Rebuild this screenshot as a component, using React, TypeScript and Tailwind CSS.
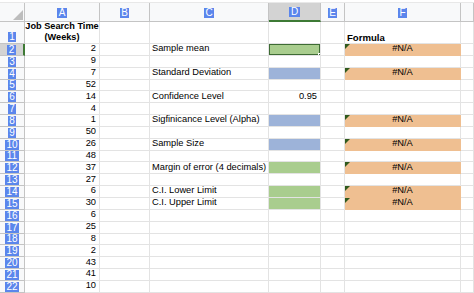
import React from 'react';

type Fill = 'green' | 'blue' | 'orange' | undefined;

interface Row {
    a: string;
    c?: string;
    d?: string;
    dFill?: Fill;
    f?: boolean;
}

const rows: Row[] = [
    { a: '2', c: 'Sample mean', dFill: 'green', f: true },
    { a: '9' },
    { a: '7', c: 'Standard Deviation', dFill: 'blue', f: true },
    { a: '52' },
    { a: '14', c: 'Confidence Level', d: '0.95' },
    { a: '4' },
    { a: '1', c: 'Sigfinicance Level (Alpha)', dFill: 'blue', f: true },
    { a: '50' },
    { a: '26', c: 'Sample Size', dFill: 'blue', f: true },
    { a: '48' },
    { a: '37', c: 'Margin of error (4 decimals)', dFill: 'green', f: true },
    { a: '27' },
    { a: '6', c: 'C.I. Lower Limit', dFill: 'green', f: true },
    { a: '30', c: 'C.I. Upper Limit', dFill: 'green', f: true },
    { a: '6' },
    { a: '25' },
    { a: '8' },
    { a: '2' },
    { a: '43' },
    { a: '41' },
    { a: '10' },
];

const fillClass: Record<string, string> = {
    green: 'bg-[#a9cd8e] border-[#a9cd8e]',
    blue: 'bg-[#9db3d9] border-[#9db3d9]',
    orange: 'bg-[#efbf91] border-[#efbf91]',
};

const COLS = 'grid grid-cols-[25px_75px_50px_119px_52px_24px_116px_1fr]';
const CELL = 'border-r border-b border-[#e3e3e3] flex items-end pb-[0.5px] overflow-hidden whitespace-nowrap leading-[11px]';

const Badge = ({ children }: { children: React.ReactNode }) => (
    <span className="bg-[#5b86ec] text-white text-[10px] leading-[10px] px-[1.5px] h-[10px] flex items-center">
        {children}
    </span>
);

const Corner = () => (
    <span className="absolute top-0 left-0 w-0 h-0 border-t-[5px] border-r-[5px] border-t-[#2f5a1d] border-r-transparent" />
);

export default function App() {
    return (
        <div className="w-[474px] h-[293px] overflow-hidden bg-white text-black text-[9.3px] font-['Liberation_Sans',Arial,sans-serif]">
            <div className="h-[3px] bg-white border-b border-[#e8e8e8]" />

            {/* Column headers */}
            <div className={`${COLS} h-[19px] bg-[#f8f9fa]`}>
                <div className="relative border-r border-b border-[#c4c4c4]">
                    <span className="absolute right-[1px] bottom-[1px] w-0 h-0 border-b-[10px] border-l-[10px] border-b-[#bdbdbd] border-l-transparent" />
                </div>
                {['A', 'B', 'C', 'D', 'E', 'F', ''].map((l) => (
                    <div
                        key={l || 'g'}
                        className={`flex items-end justify-center pb-[3px] border-r border-b ${
                            l === 'D'
                                ? 'bg-[#d3d3d3] border-r-[#c4c4c4] border-b-2 border-b-[#3e7a35]'
                                : 'border-[#c4c4c4]'
                        }`}
                    >
                        {l && <Badge>{l}</Badge>}
                    </div>
                ))}
            </div>

            {/* Row 1 */}
            <div className={`${COLS} h-[22px]`}>
                <div className="flex items-end justify-center pb-[1px] border-r border-b border-[#c4c4c4] bg-[#f8f9fa]">
                    <Badge>1</Badge>
                </div>
                <div className={`${CELL} justify-center text-center font-bold text-[9.2px] leading-[10.5px]`}>
                    <span>Job Search Time<br />(Weeks)</span>
                </div>
                <div className={CELL} />
                <div className={CELL} />
                <div className={CELL} />
                <div className={CELL} />
                <div className={`${CELL} pl-[2px] font-bold text-[9.6px]`}>Formula</div>
                <div className={CELL} />
            </div>

            {rows.map((r, i) => {
                const n = i + 2;
                const selected = n === 2;
                return (
                    <div key={n} className={`${COLS} h-[11.85px]`}>
                        <div
                            className={`flex items-end justify-center border-b ${
                                selected
                                    ? 'bg-[#d3d3d3] border-r-2 border-r-[#3e7a35] border-b-[#c4c4c4]'
                                    : 'bg-[#f8f9fa] border-r border-[#c4c4c4]'
                            }`}
                        >
                            <Badge>{n}</Badge>
                        </div>
                        <div className={`${CELL} justify-end pr-[3px]`}>{r.a}</div>
                        <div className={CELL} />
                        <div className={`${CELL} pl-[2px]`}>{r.c}</div>
                        <div className={`${CELL} relative justify-end pr-[3px] ${r.dFill ? fillClass[r.dFill] : ''}`}>
                            {r.d}
                            {selected && (
                                <>
                                    <span className="absolute -left-px -top-px -right-px -bottom-px border-2 border-[#3e6b34]" />
                                    <span className="absolute -right-[2px] -bottom-[2px] w-[4px] h-[4px] bg-[#3e6b34] border border-white" />
                                </>
                            )}
                        </div>
                        <div className={CELL} />
                        <div className={`${CELL} relative justify-center ${r.f ? fillClass.orange : ''}`}>
                            {r.f && (
                                <>
                                    <Corner />
                                    #N/A
                                </>
                            )}
                        </div>
                        <div className={CELL} />
                    </div>
                );
            })}
        </div>
    );
}
